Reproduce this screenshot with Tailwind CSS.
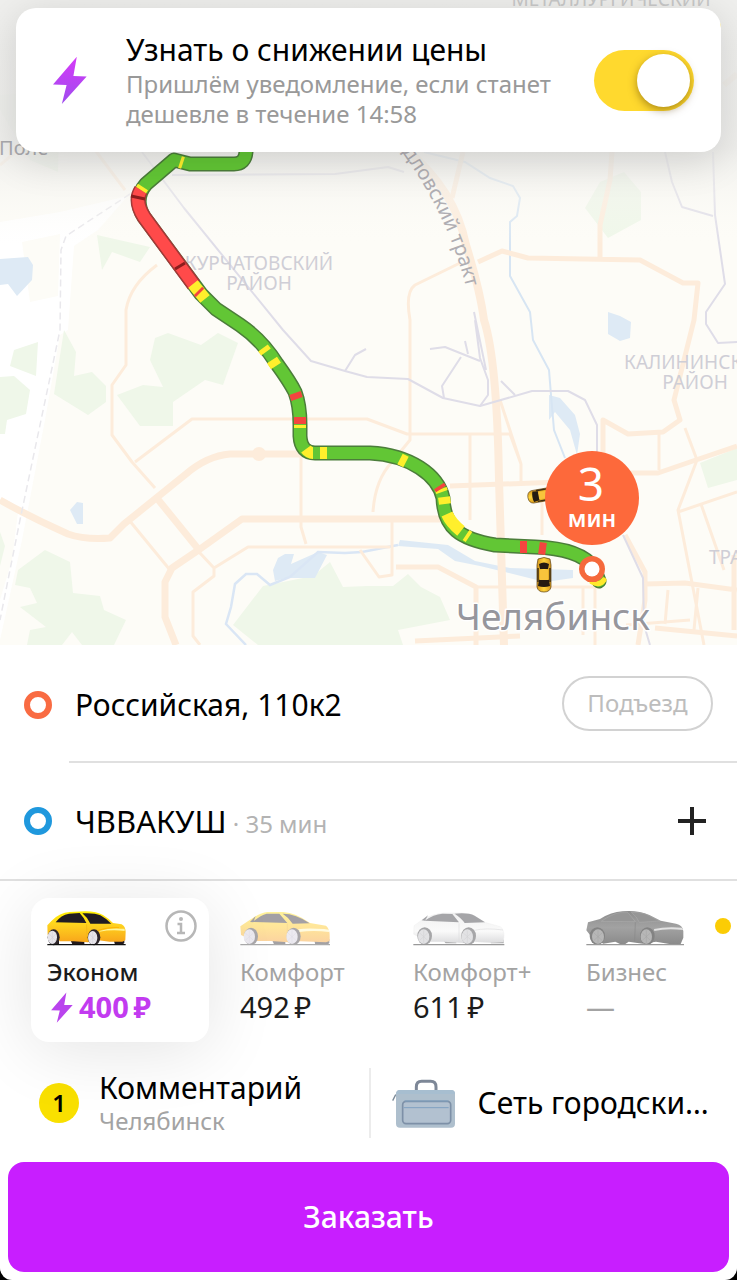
<!DOCTYPE html>
<html lang="ru">
<head>
<meta charset="utf-8">
<meta name="viewport" content="width=device-width, initial-scale=1">
<title>Заказ такси</title>
<script src="https://cdn.jsdelivr.net/npm/@tailwindcss/browser@4"></script>
</head>
<body class="bg-black font-['Noto_Sans',sans-serif] text-black">
<main class="min-h-screen overflow-hidden rounded-b-xl bg-white">

<section class="relative h-[645px] overflow-hidden bg-[#fdfcf7]" aria-label="Карта">
<svg class="absolute inset-0 h-full w-full" viewBox="0 0 737 645" preserveAspectRatio="xMidYMid slice" fill="none">
  <defs>
    <linearGradient id="topShade" x1="0" y1="0" x2="0" y2="1">
      <stop offset="0" stop-color="#efefed"/><stop offset=".6" stop-color="#ececea" stop-opacity=".85"/><stop offset="1" stop-color="#fdfcf7" stop-opacity="0"/>
    </linearGradient>
    <linearGradient id="cab" x1="0" y1="0" x2="1" y2="0">
      <stop offset="0" stop-color="#d99a1c"/><stop offset=".5" stop-color="#ffd53d"/><stop offset="1" stop-color="#d99a1c"/>
    </linearGradient>
    <g id="taxi">
      <path d="M-6-16Q0-19 6-16L7-10V12Q6 17 0 17T-7 12V-10Z" fill="url(#cab)" stroke="#5a3d10" stroke-width=".7"/>
      <path d="M-5-11Q0-14 5-11L4-6H-4ZM-5 5Q0 3 5 5L6 11Q0 13-6 11Z" fill="#241b12"/>
      <path d="M-6-7V7M6-7V7" stroke="#3c2b12" stroke-width="1.5"/>
      <path d="M-4-5H4V5H-4Z" fill="#f8c43c"/>
    </g>
  </defs>

  <!-- open ground -->
  <path d="M0 222L60 212L128 196L98 230L74 246L68 330L60 335L45 420L22 540L0 640Z" fill="#fff"/>
  <path d="M22 242L60 234L58 296L30 302ZM0 500L18 512L12 560L0 600Z" fill="#fdfcf7"/>
  <!-- parks -->
  <g fill="#eff7e9">
    <path d="M97 235L150 247L140 262L112 252L102 270ZM64 330L76 352L74 376L92 372L106 386V402L88 415L54 394ZM14 350L38 342L36 376L10 366ZM0 377L14 376L30 390L26 414L7 420L5 434H0ZM155 338L168 333L201 345L218 333L238 343L223 385L205 380L173 402V426H140L117 395L143 385L163 387L150 360Z"/>
    <path d="M0 532L5 546L0 566ZM45 550L70 562L73 593L100 596L104 610L126 620L114 645H82L72 632L62 645H27L30 630L46 627L20 607L37 603L30 588L15 585L18 570Z"/>
    <path d="M263 586L313 576L330 562L343 587L367 586H393L408 574L421 587L440 597L450 620L398 630L403 645H258L233 625Z"/>
    <path d="M585 208L600 182L624 172L641 192V220L608 238ZM700 463L737 448V480L708 488ZM270 0H295L288 7H272ZM0 95L60 90L58 172L30 160L0 110ZM440 0H470V8H440Z"/>
  </g>
  <!-- water -->
  <g fill="#deeaf5">
    <path d="M0 259L28 257L33 265L32 280L17 296L8 284L0 285ZM70 510L77 502L83 503V524H77ZM273 570L278 558L285 554L294 554L291 564L318 552L327 555L315 578L286 578L275 581ZM608 312L620 316L631 322L630 338L620 341L608 334Z"/>
    <path d="M549 395L560 398L575 415L580 434L577 455L570 430L555 412L549 420ZM400 540L448 545L475 561L510 568L573 570V578L545 582L525 577L480 566L455 561L438 549L398 546Z"/>
  </g>
  <g stroke="#dae6f5" stroke-width="2.5">
    <path d="M246 645L226 624L231 607L235 584L246 574H257L270 585L290 577L318 552L345 553L362 552L398 545"/>
    <path d="M424 152L465 162L490 178L513 186L520 198L517 216L510 222V276L530 312L533 340L549 370L551 395L554 430L565 458" stroke="#d7e5f3" stroke-width="2"/>
  </g>
  <!-- roads -->
  <g stroke="#fdecdb" stroke-linejoin="round">
    <path d="M0 500Q30 517 68 534Q85 540 110 538L124 524L186 474Q207 456 230 454H300M156 497L199 550M176 645L165 617V582L172 568L200 549L242 519H440" stroke-width="7"/>
    <circle cx="259" cy="454" r="7" fill="#fdecdb" stroke="none"/>
    <path d="M157 265Q130 285 126 310V365L112 385V435L132 462L155 488M135 462L192 419H367L407 434H510L521 464V484M129 520L170 570M199 552L214 568L248 547H390M214 568V576L193 592V636L200 645M301 454V527L306 544M410 400V320Q405 292 415 285L460 263M410 400V440L392 462Q375 480 373 512M470 434V520M392 520V575L379 577L360 550M475 587H600M542 495V535M500 400L521 464" stroke-width="3"/>
    <path d="M478 262L502 251L528 258L640 260L683 283H698L694 320L674 400L680 420L663 432L628 434L603 420V470M450 486L560 482M617 473H658L690 462L737 446M396 567H438L476 587V645M612 152L610 180L600 225V258M463 152L452 198M625 535L645 572V600L638 645M645 584L685 583L737 590M734 555V630M415 641L520 636M655 628L737 636" stroke-width="5"/>
    <path d="M407 150Q455 190 466 245Q480 290 484 320Q497 360 499 480L504 645" stroke-width="8"/>
    <path d="M659 434V470M685 428L697 460L678 510L704 645M678 512L737 492M701 504L724 570M595 585V645M583 587V635M668 590L665 624M698 588L694 630M626 625L690 620M95 150L125 190M0 165L35 135" stroke-width="3"/>
    <path d="M353 0L366 20M724 85L737 74M700 0L704 9" stroke="#f9dcc0" stroke-width="6"/>
  </g>
  <!-- railways -->
  <g stroke="#dfdde8" stroke-width="2" stroke-linejoin="round">
    <path d="M20 0L35 14M142 152L184 208L283 330L311 361L345 371L367 377L408 379L443 398L480 406L532 391H568L585 400L597 425V455M345 371L355 355L366 349"/>
    <path d="M172 175L335 174L388 167L404 172M475 320L480 358L488 380V395L480 406M430 349L445 347L480 361M465 341L468 354M461 357L442 386L444 398M501 381L515 395M665 152L672 182L682 207L713 216M713 152L715 215L725 284L706 312V324L718 343L737 342M474 312L486 370M623 535L643 578L644 625L650 645"/>
    <path d="M130 194L66 236L61 250L60 330L20 520L0 620" stroke-width="1.5" stroke="#e9e8ec" stroke-dasharray="7 4"/>
  </g>
  <rect width="737" height="245" fill="url(#topShade)"/>
  <circle cx="716" cy="26" r="5" fill="#f5ce28"/>

  <!-- place names -->
  <g font-family="Noto Sans, sans-serif" text-anchor="middle" stroke-linejoin="round">
    <g font-size="19" fill="#cfced6">
      <text x="259" y="270">КУРЧАТОВСКИЙ</text><text x="259" y="290">РАЙОН</text>
      <text x="624" y="369" text-anchor="start">КАЛИНИНСКИЙ</text><text x="695" y="389">РАЙОН</text>
      <text x="709" y="564" text-anchor="start">ТРАКТОРО</text><text x="611" y="6" fill="#c8c8c8">МЕТАЛЛУРГИЧЕСКИЙ</text>
    </g>
    <text x="-1" y="155" font-size="20" fill="#a9a9ad" text-anchor="start">Поле</text>
    <path id="tractRoad" d="M370 112Q452 205 471 310"/>
    <text font-size="20" fill="#b0aeb3" text-anchor="start"><textPath href="#tractRoad" startOffset="4">Свердловский тракт</textPath></text>
    <text x="553" y="630" font-size="37" fill="#96969c" stroke="#fff" stroke-width="3" paint-order="stroke">Челябинск</text>
  </g>

  <!-- route coloured by traffic -->
  <g stroke-linejoin="round">
    <path d="M246 148V152Q245 164 234 164H190L174 160L146 184Q133 199 144 217L201 294L216 309L240 325Q262 340 277 364Q290 382 295 392Q300 405 300 425V436Q301 453 315 453H370C410 455 438 475 443 498C444 528 460 539 495 545L535 547C565 548 585 555 594 568L599 581" stroke="#4b7d3a" stroke-width="15" stroke-linecap="round"/>
    <path d="M246 148V152Q245 164 234 164H190L174 160L146 184Q133 199 144 217L201 294L216 309L240 325Q262 340 277 364Q290 382 295 392Q300 405 300 425V436Q301 453 315 453H370C410 455 438 475 443 498C444 528 460 539 495 545L535 547C565 548 585 555 594 568L599 581" stroke="#62c635" stroke-width="12" stroke-linecap="round"/>
    <path d="M141 190Q134 201 144 217L194 285" stroke="#a33838" stroke-width="15"/>
    <path d="M141 190Q134 201 144 217L194 285" stroke="#ff4a4a" stroke-width="12"/>
    <path d="M180 162L183 163M143 187L141 190M193 284L205 299M263 348L266 352M272 360L276 366M300 425V428M306 449Q309 453 313 453M320 453H327M400 459L406 462M441 489L442 492M444 497L445 504M447 514Q451 523 461 531M466 535L469 537" stroke="#ffef2c" stroke-width="12"/>
    <path d="M592 582Q600 586 604 580" stroke="#ffe92c" stroke-width="5" stroke-linecap="round"/>
    <path d="M198 291L200 293M295 393L297 399M300 417V424M439 486L441 489M520 547L527 547M539 548L546 549" stroke="#f4453f" stroke-width="12"/>
    <path d="M131 196L145 199M175 269L185 263" stroke="#8c1d1d" stroke-width="3"/>
  </g>

  <use href="#taxi" transform="translate(544 575)"/>
  <use href="#taxi" transform="translate(543 495) rotate(80) scale(.9)"/>
  <path d="M579 569A13 13 0 0 1 605 569Q605 578 596 582H588Q579 577 579 569Z" fill="#f5693c"/>
  <circle cx="592" cy="569" r="7.5" fill="#fff"/>
  <circle cx="592" cy="498" r="47" fill="#fd693b"/>
  <g font-family="Noto Sans, sans-serif" text-anchor="middle" fill="#fff">
    <text x="591" y="501" font-size="46">3</text>
    <text x="592" y="527" font-size="23" font-weight="600">мин</text>
  </g>
</svg>

<div class="relative mx-4 mt-2 flex h-36 items-center rounded-[20px] bg-white pr-[27px] pl-[37px] shadow-[0_8px_40px_rgba(0,0,0,0.14)]">
  <svg class="w-[34px] shrink-0" viewBox="0 0 100 142"><defs><linearGradient id="bolt" x1="0" y1="0" x2="0" y2="1"><stop offset="0" stop-color="#d63af8"/><stop offset="1" stop-color="#9e4dee"/></linearGradient></defs><path d="M70 2L0 84L40 85L26 141L99 60L60 59Z" fill="url(#bolt)"/></svg>
  <label for="notify" class="ml-[39px] flex-1">
    <span class="block text-3xl leading-[38px]">Узнать о снижении цены</span>
    <span class="block text-2xl leading-[30px] text-[#999]">Пришлём уведомление, если станет<br>дешевле в течение 14:58</span>
  </label>
  <input id="notify" type="checkbox" role="switch" checked class="h-[61px] w-[100px] shrink-0 appearance-none rounded-full bg-[#ffd92e] p-1 before:ml-auto before:block before:size-[53px] before:rounded-full before:bg-white before:shadow-[0_3px_8px_rgba(90,60,0,0.5)]">
</div>
</section>

<section aria-label="Маршрут">
  <div class="flex h-[116px] items-center pr-6 pl-6">
    <a href="#" class="flex flex-1 items-center pt-1 text-3xl"><span class="mr-[23px] size-7 shrink-0 rounded-full border-[6px] border-[#f96b42]"></span>Российская, 110к2</a>
    <button type="button" class="h-[55px] w-[151px] rounded-full border-2 border-[#d2d2d2] text-2xl text-[#bdbdbd]">Подъезд</button>
  </div>
  <div class="ml-[69px] border-t-2 border-[#e0e0e0]"></div>
  <div class="flex h-[116px] items-center pr-[30px] pl-6">
    <a href="#" class="flex flex-1 items-center"><span class="mr-[23px] size-7 shrink-0 rounded-full border-[6px] border-[#1f98dd]"></span><span class="text-[31px]">ЧВВАКУШ<span class="text-2xl text-[#b3b3b3]"> · 35 мин</span></span></a>
    <button type="button" aria-label="Добавить остановку"><svg class="size-[30px]" viewBox="0 0 30 30"><path d="M15 1V29M1 15H29" stroke="#222" stroke-width="4"/></svg></button>
  </div>
</section>

<section class="relative flex border-t-2 border-[#e0e0e0] pt-[17px] pl-[31px]" aria-label="Тарифы">
  <button type="button" aria-pressed="true" class="relative mr-[31px] flex h-36 w-[178px] shrink-0 flex-col items-start rounded-[18px] bg-white pt-[13px] pl-4 text-left shadow-[0_8px_70px_rgba(0,0,0,0.11)]">
    <svg class="h-[35px] w-20" viewBox="0 0 240 105">
      <defs><linearGradient id="eco" x1="0" y1="0" x2="0" y2="1"><stop offset="0" stop-color="#fff000"/><stop offset=".4" stop-color="#ffd51e"/><stop offset="1" stop-color="#f8a51b"/></linearGradient></defs>
      <path d="M70 86H112V100H76ZM20 80H36V101H20ZM200 86H232V96L226 101H204Z" fill="#241a1c"/>
      <path d="M2 73L1 43L14 29Q38 5 68 3L115 1Q150 2 168 12Q184 22 198 36L224 40Q235 46 236 62L235 88L226 92H188L155 88L122 94L80 91H38L20 60Z" fill="url(#eco)"/>
      <path d="M26 34Q42 12 66 8L98 6Q111 20 118 36ZM106 7Q143 5 160 13Q178 23 193 38L130 38Q122 20 106 7Z" fill="#211c23"/>
      <path d="M152 59Q180 48 216 50" stroke="#ffb500" stroke-width="3" fill="none"/><path d="M157 60Q188 51 220 53L233 53V60Q195 55 157 62Z" fill="#fff59a"/>
      <path d="M119 40L120 92" stroke="#eeb414" stroke-width="2"/>
      <ellipse cx="20" cy="79" rx="18" ry="24" fill="#2d252a"/><ellipse cx="16" cy="79" rx="14" ry="20" fill="#e7e5ea"/><ellipse cx="141" cy="79" rx="19" ry="24" fill="#2d252a"/><ellipse cx="137" cy="80" rx="14" ry="20" fill="#e7e5ea"/>
      <path d="M16 60V98M6 68L27 90M6 90L27 68M137 61V99M127 69L148 91M127 91L148 69" stroke="#d0cdd6" stroke-width="1.5"/>
      <path d="M1 101H236" stroke="#111" stroke-width="4"/>
    </svg>
    <svg class="absolute top-3 right-3 size-8" viewBox="0 0 32 32" fill="none" stroke="#b7b7b7" stroke-width="2.5"><circle cx="16" cy="16" r="14.5"/><path d="M12.5 14H16V23M12 23H20" stroke-width="2.5"/><circle cx="16" cy="9" r="2" fill="#b7b7b7" stroke="none"/></svg>
    <span class="pt-[9px] text-2xl leading-[34px] font-medium text-[#1c1c1c]">Эконом</span>
    <span class="flex items-center pl-1 text-[29px] leading-9 font-bold text-[#c23bf0]"><svg class="mr-1.5 h-[31px] w-[22px]" viewBox="0 0 100 142"><path d="M70 2L0 84L40 85L26 141L99 60L60 59Z" fill="#b944ed"/></svg>400&#8201;₽</span>
  </button>

  <button type="button" class="flex h-36 w-[173px] shrink-0 flex-col items-start pt-[13px] text-left">
    <svg class="h-[35px] w-[91px]" viewBox="0 0 273 105">
      <defs><linearGradient id="cmf" x1="0" y1="0" x2="0" y2="1"><stop offset="0" stop-color="#fff29a"/><stop offset=".5" stop-color="#ffe59a"/><stop offset="1" stop-color="#fbd3a0"/></linearGradient></defs>
      <path d="M96 86H136V100H102ZM222 84H268V96L262 101H226Z" fill="#a3a1a4"/>
      <path d="M3 72L1 46L30 26Q62 5 82 3H130Q167 5 210 36L258 44Q269 53 269 74V90L258 94L182 91L145 94L92 90H42Z" fill="url(#cmf)"/>
      <path d="M38 33Q61 13 80 8H118L142 36ZM128 8Q168 8 209 37L158 38Q147 20 128 8ZM30 33L47 15L40 34Z" fill="#a3a0a5"/>
      <path d="M175 55Q200 50 252 54L267 56V63Q222 57 176 63Z" fill="#fffbe0"/>
      <path d="M142 38L142 92" stroke="#f3d898" stroke-width="2"/>
      <ellipse cx="33" cy="76" rx="21" ry="26" fill="#a9a7aa"/><ellipse cx="28" cy="77" rx="17" ry="22" fill="#eceaf0"/><ellipse cx="161" cy="76" rx="21" ry="26" fill="#a9a7aa"/><ellipse cx="156" cy="77" rx="17" ry="22" fill="#eceaf0"/>
      <path d="M28 58V97M16 66L40 88M16 88L40 66M156 58V97M144 66L168 88M144 88L168 66" stroke="#dedbe4" stroke-width="1.5"/>
      <path d="M1 101H270" stroke="#aaa" stroke-width="4"/>
    </svg>
    <span class="pt-[9px] text-2xl leading-[34px] text-[#a3a3a3]">Комфорт</span>
    <span class="text-[29px] leading-9 text-[#1c1c1c]">492&#8201;₽</span>
  </button>

  <button type="button" class="flex h-36 w-[173px] shrink-0 flex-col items-start pt-[13px] text-left">
    <svg class="h-[35px] w-[92px]" viewBox="0 0 276 105">
      <defs><linearGradient id="plus" x1="0" y1="0" x2="0" y2="1"><stop offset="0" stop-color="#f1f1f1"/><stop offset=".6" stop-color="#fafafa"/><stop offset="1" stop-color="#dcdcde"/></linearGradient></defs>
      <path d="M90 88H130V97H98ZM230 86H272V97H234Z" fill="#a9a9aa"/>
      <path d="M2 70L3 44L28 26Q60 8 90 6H145Q180 8 215 34L262 47Q273 54 273 75L271 93L235 95L180 92L150 96L95 92H48Z" fill="url(#plus)" stroke="#e9e9ea"/>
      <path d="M35 29Q62 10 88 8L118 9L138 34ZM125 8Q165 4 185 14L216 34L155 36Q146 22 125 8ZM26 28L45 13L36 29Z" fill="#a5a5a8"/>
      <path d="M184 58Q218 50 270 57M138 37V94" stroke="#dedee0" stroke-width="2" fill="none"/>
      <ellipse cx="35" cy="75" rx="22" ry="26" fill="#a6a6a8"/><ellipse cx="32" cy="77" rx="17" ry="22" fill="#e2e2e4"/><ellipse cx="167" cy="75" rx="22" ry="26" fill="#a6a6a8"/><ellipse cx="163" cy="77" rx="17" ry="22" fill="#e2e2e4"/>
      <path d="M32 58V97M20 66L44 88M20 88L44 66M163 58V97M151 66L175 88M151 88L175 66" stroke="#d0d0d3" stroke-width="1.5"/>
      <path d="M1 101H274" stroke="#999" stroke-width="4"/>
    </svg>
    <span class="pt-[9px] text-2xl leading-[34px] text-[#a3a3a3]">Комфорт+</span>
    <span class="text-[29px] leading-9 text-[#1c1c1c]">611&#8201;₽</span>
  </button>

  <button type="button" class="flex h-36 min-w-0 flex-1 flex-col items-start pt-[13px] text-left">
    <svg class="h-[35px] w-[99px]" viewBox="0 0 297 105">
      <defs><linearGradient id="biz" x1="0" y1="0" x2="0" y2="1"><stop offset="0" stop-color="#8d8d8d"/><stop offset=".5" stop-color="#a2a2a2"/><stop offset="1" stop-color="#8b8b8b"/></linearGradient></defs>
      <path d="M12 72L1 58L6 34L42 24Q75 3 110 1Q155-3 190 12L224 29L270 38Q290 42 292 60V80L284 99H250L210 92L170 98L128 92L118 99H102L88 92L52 98Z" fill="url(#biz)"/>
      <path d="M46 31Q78 8 102 5L126 5L148 32ZM136 4Q170 3 190 14L222 30L160 34Q153 17 136 4Z" fill="#969696" stroke="#bcbcbc"/>
      <path d="M204 54Q240 46 287 50L292 57Q242 51 205 60Z" fill="#e2e2e2"/><path d="M148 34L146 92" stroke="#888" stroke-width="2"/>
      <ellipse cx="34" cy="75" rx="23" ry="26" fill="#838383"/><ellipse cx="36" cy="77" rx="18" ry="22" fill="#b7b7b7"/><ellipse cx="184" cy="75" rx="22" ry="26" fill="#838383"/><ellipse cx="181" cy="77" rx="17" ry="22" fill="#b7b7b7"/>
      <path d="M36 58V97M24 66L48 88M24 88L48 66M181 58V97M169 66L193 88M169 88L193 66" stroke="#a5a5a5" stroke-width="1.5"/>
      <path d="M1 101H294" stroke="#999" stroke-width="4"/>
    </svg>
    <span class="pt-[9px] text-2xl leading-[34px] text-[#a3a3a3]">Бизнес</span>
    <span class="text-[29px] leading-9 text-[#a3a3a3]">—</span>
  </button>
  <span class="absolute top-[37px] right-[6px] size-4 rounded-full bg-[#fbcc05]"></span>
</section>

<section class="mt-[26px] flex h-[70px]">
  <a href="#" class="flex w-1/2 items-center pl-[39px]">
    <span class="flex size-10 shrink-0 items-center justify-center rounded-full bg-[#f9e000] text-2xl font-semibold">1</span>
    <span class="ml-5"><span class="block text-3xl leading-9">Комментарий</span><span class="block text-2xl leading-[30px] text-[#a3a3a3]">Челябинск</span></span>
  </a>
  <a href="#" class="flex w-1/2 min-w-0 items-center border-l-2 border-[#ececec] pr-5 pl-[21px]">
    <svg class="h-[50px] w-16 shrink-0" viewBox="0 0 192 150" fill="none">
      <path d="M73 38V27Q73 10 89 10H116Q132 10 132 27V38" stroke="#7d8797" stroke-width="9"/>
      <path d="M2 68L10 52L20 47" stroke="#7d8b99" stroke-width="4"/>
      <rect x="12" y="36" width="177" height="113" rx="12" fill="#aebfcd"/>
      <path d="M22 36H178Q189 36 189 48H12Q14 36 22 36" fill="#a7bed0"/>
      <rect x="32" y="70" width="144" height="67" rx="10" fill="#b2c1d0" stroke="#7d90a7" stroke-width="5"/>
      <path d="M35 89H170M38 69H169" stroke="#7fa0c0" stroke-width="3"/>
    </svg>
    <span class="ml-[22px] truncate text-3xl">Сеть городских клиник</span>
  </a>
</section>

<div class="px-2 pt-6 pb-2"><button type="button" class="h-[110px] w-full rounded-2xl bg-[#c81eff] text-3xl font-medium text-white">Заказать</button></div>
</main>
</body>
</html>
